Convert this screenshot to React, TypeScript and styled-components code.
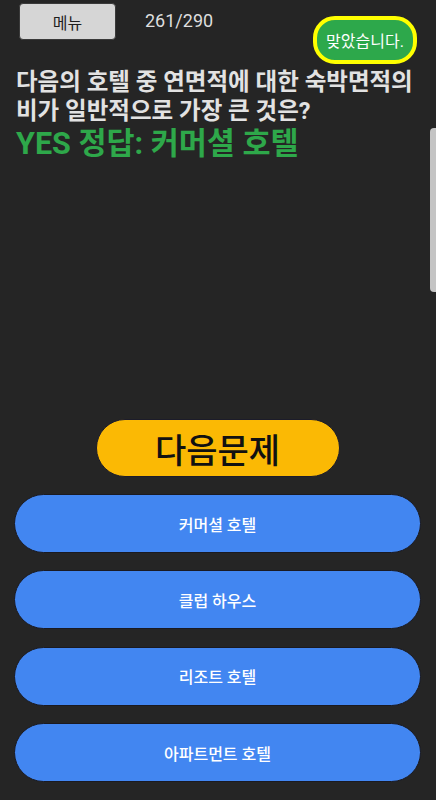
import React from "react";
import styled, { createGlobalStyle } from "styled-components";

const Global = createGlobalStyle`
  html, body { margin: 0; padding: 0; background: #252525; }
  body { font-family: Roboto, "Noto Sans CJK KR", sans-serif; }
  * { box-sizing: border-box; }
`;

const Screen = styled.div`
  position: relative;
  height: 800px;
  display: flex;
  flex-direction: column;
  padding: 0 15px 18px 14px;
  overflow: hidden;
`;

const Header = styled.div`
  display: flex;
  align-items: flex-start;
  padding: 0 4px 0 5px;
`;

const MenuButton = styled.button`
  margin-top: 3px;
  width: 97px;
  height: 37px;
  background: #d6d6d6;
  border: 1px solid #3a3a3a;
  border-radius: 4px;
  font-family: Roboto, "Noto Sans CJK KR", sans-serif;
  font-size: 16px;
  color: #1e1e1e;
  padding: 0;
`;

const Counter = styled.div`
  margin: 9px 0 0 29px;
  font-size: 18px;
  color: #dedede;
  line-height: 24px;
`;

const Badge = styled.div`
  margin: 16px 0 0 auto;
  width: 104px;
  height: 48px;
  border: 4px solid #ffff00;
  border-radius: 22px;
  background: #2da84b;
  color: #ffffff;
  font-size: 16px;
  display: flex;
  align-items: center;
  justify-content: center;
`;

const Question = styled.div`
  margin: 4px 0 0 2px;
  font-size: 23.5px;
  line-height: 29px;
  font-weight: 700;
  color: #e2e2e2;
`;

const Answer = styled.div`
  margin: 0 0 0 2px;
  font-size: 30.5px;
  line-height: 36px;
  font-weight: 700;
  color: #2ea84a;
`;

const Bottom = styled.div`
  margin-top: auto;
  display: flex;
  flex-direction: column;
  gap: 17px;
`;

const NextButton = styled.button`
  align-self: center;
  width: 244px;
  height: 58px;
  border-radius: 29px;
  border: 1px solid #1c1c2a;
  background: #fbb904;
  color: #111111;
  font-family: Roboto, "Noto Sans CJK KR", sans-serif;
  font-size: 34px;
  font-weight: 500;
  padding: 0;
`;

const Choices = styled.div`
  display: flex;
  flex-direction: column;
  gap: 17.3px;
`;

const Choice = styled.button`
  width: 100%;
  height: 59px;
  border-radius: 29.5px;
  border: 1px solid #1a1a22;
  background: #4286f1;
  color: #ffffff;
  font-family: Roboto, "Noto Sans CJK KR", sans-serif;
  font-size: 16px;
  font-weight: 500;
  padding: 0;
`;

const ScrollThumb = styled.div`
  position: absolute;
  right: 0;
  top: 128px;
  width: 6px;
  height: 164px;
  background: #c4c4c4;
  border-radius: 4px 0 0 4px;
`;

const choices = ["커머셜 호텔", "클럽 하우스", "리조트 호텔", "아파트먼트 호텔"];

export default function App() {
  return (
    <>
      <Global />
      <Screen>
        <Header>
          <MenuButton>메뉴</MenuButton>
          <Counter>261/290</Counter>
          <Badge>맞았습니다.</Badge>
        </Header>
        <Question>다음의 호텔 중 연면적에 대한 숙박면적의 비가 일반적으로 가장 큰 것은?</Question>
        <Answer>YES 정답: 커머셜 호텔</Answer>
        <Bottom>
          <NextButton>다음문제</NextButton>
          <Choices>
            {choices.map((c) => (
              <Choice key={c}>{c}</Choice>
            ))}
          </Choices>
        </Bottom>
        <ScrollThumb />
      </Screen>
    </>
  );
}
